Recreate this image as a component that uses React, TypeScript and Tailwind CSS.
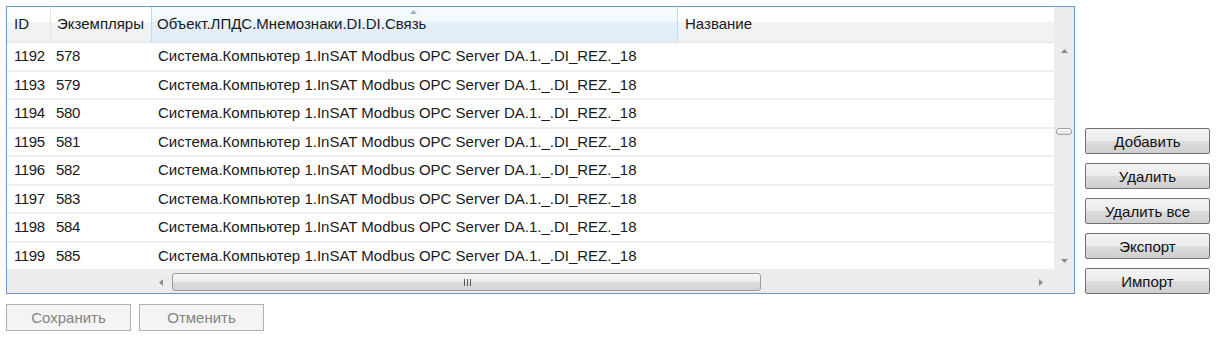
import React from 'react';

const rows = [
  ['1192', '578'],
  ['1193', '579'],
  ['1194', '580'],
  ['1195', '581'],
  ['1196', '582'],
  ['1197', '583'],
  ['1198', '584'],
  ['1199', '585'],
];

const path = 'Система.Компьютер 1.InSAT Modbus OPC Server DA.1._.DI_REZ._18';

function Arrow({ dir }: { dir: 'up' | 'down' | 'left' | 'right' }) {
  const pts = {
    up: '0,4 3.5,0 7,4',
    down: '0,0 7,0 3.5,4',
    left: '4,0 4,7 0,3.5',
    right: '0,0 4,3.5 0,7',
  }[dir];
  const vertical = dir === 'up' || dir === 'down';
  return (
    <svg width={vertical ? 7 : 4} height={vertical ? 4 : 7} viewBox={vertical ? '0 0 7 4' : '0 0 4 7'}>
      <polygon points={pts} fill="#8c8c8c" />
    </svg>
  );
}

function WinButton({ label, disabled }: { label: string; disabled?: boolean }) {
  if (disabled) {
    return (
      <button className="w-[125px] h-[27px] border border-[#adb2b5] bg-[#f4f4f4] text-[#838383] text-[15px] leading-none">
        {label}
      </button>
    );
  }
  return (
    <button className="w-[125px] h-[26px] border border-[#707070] rounded-[2px] bg-[linear-gradient(to_bottom,#f3f3f3_0%,#ebebeb_50%,#dddddd_50%,#cfcfcf_100%)] text-[#111] text-[15px] leading-none">
      {label}
    </button>
  );
}

export default function App() {
  return (
    <div className="w-[1220px] h-[339px] bg-white pt-[6px] pl-[6px] font-['Liberation_Sans',Arial,sans-serif] text-[15px] text-[#1a1a1a]">
      <div className="flex items-end gap-[10px]">
        {/* Grid */}
        <div className="w-[1069px] h-[288px] border border-[#6f97c6] flex flex-col">
          <div className="flex flex-1 min-h-0">
            <div className="flex flex-col flex-1 min-w-0">
              {/* Header */}
              <div className="flex h-[36px] shrink-0 border-b border-[#e3e4e6] bg-[linear-gradient(to_bottom,#ffffff_0%,#ffffff_42%,#f2f3f5_42%,#f0f1f3_100%)]">
                <div className="w-[44px] pl-[7px] flex items-center border-r border-[#e2e3e5]">ID</div>
                <div className="w-[100px] pl-[6px] flex items-center whitespace-nowrap">Экземпляры</div>
                <div className="relative w-[527px] pl-[5px] flex items-center border-x border-[#c0daf0] bg-[linear-gradient(to_bottom,#f6fbfe_0%,#f1f8fd_42%,#e4f0fa_42%,#dfedf9_100%)]">
                  <svg className="absolute left-[258px] top-[3px]" width="7" height="4" viewBox="0 0 7 4">
                    <polygon points="0,4 3.5,0 7,4" fill="#9db1c6" />
                  </svg>
                  Объект.ЛПДС.Мнемознаки.DI.DI.Связь
                </div>
                <div className="flex-1 pl-[7px] flex items-center">Название</div>
              </div>
              {/* Rows */}
              <div className="flex flex-col flex-1">
                {rows.map(([id, inst]) => (
                  <div key={id} className="flex h-[28.5px] border-b-2 border-[#efefef] items-center">
                    <div className="w-[44px] pl-[7px] tracking-[-0.4px]">{id}</div>
                    <div className="w-[100px] pl-[5px] tracking-[-0.4px]">{inst}</div>
                    <div className="w-[527px] pl-[7px] whitespace-nowrap">{path}</div>
                    <div className="flex-1" />
                  </div>
                ))}
              </div>
            </div>
            {/* Vertical scrollbar */}
            <div className="w-[20px] flex flex-col bg-[#ececec]">
              <div className="h-[36px] shrink-0" />
              <div className="h-[17px] flex items-center justify-center pb-[1px]">
                <Arrow dir="up" />
              </div>
              <div className="flex-1 pt-[68px] flex flex-col items-center">
                <div className="w-[16px] h-[7px] rounded-[3px] border border-[#a0a0a0] bg-[linear-gradient(to_bottom,#fafafa,#dedede)]" />
              </div>
              <div className="h-[17px] flex items-center justify-center pb-[4px]">
                <Arrow dir="down" />
              </div>
            </div>
          </div>
          {/* Horizontal scrollbar */}
          <div className="h-[22px] shrink-0 flex bg-[#ececec]">
            <div className="w-[144px]" />
            <div className="w-[20px] flex items-center justify-center">
              <Arrow dir="left" />
            </div>
            <div className="flex-1 flex items-center">
              <div className="ml-[1px] w-[589px] h-[18px] rounded-[3px] border border-[#9c9c9c] bg-[linear-gradient(to_bottom,#f6f6f6_0%,#ececec_50%,#dcdcdc_50%,#d4d4d4_100%)] flex items-center justify-center">
                <div className="flex gap-[2px] ml-[2px]">
                  <div className="w-[1px] h-[7px] bg-[#5a5a5a]" />
                  <div className="w-[1px] h-[7px] bg-[#5a5a5a]" />
                  <div className="w-[1px] h-[7px] bg-[#5a5a5a]" />
                </div>
              </div>
            </div>
            <div className="w-[20px] flex items-center justify-center pr-[6px]">
              <Arrow dir="right" />
            </div>
            <div className="w-[20px]" />
          </div>
        </div>

        {/* Side buttons */}
        <div className="flex flex-col gap-[9px]">
          <WinButton label="Добавить" />
          <WinButton label="Удалить" />
          <WinButton label="Удалить все" />
          <WinButton label="Экспорт" />
          <WinButton label="Импорт" />
        </div>
      </div>

      <div className="flex gap-[8px] mt-[10px]">
        <WinButton label="Сохранить" disabled />
        <WinButton label="Отменить" disabled />
      </div>
    </div>
  );
}
